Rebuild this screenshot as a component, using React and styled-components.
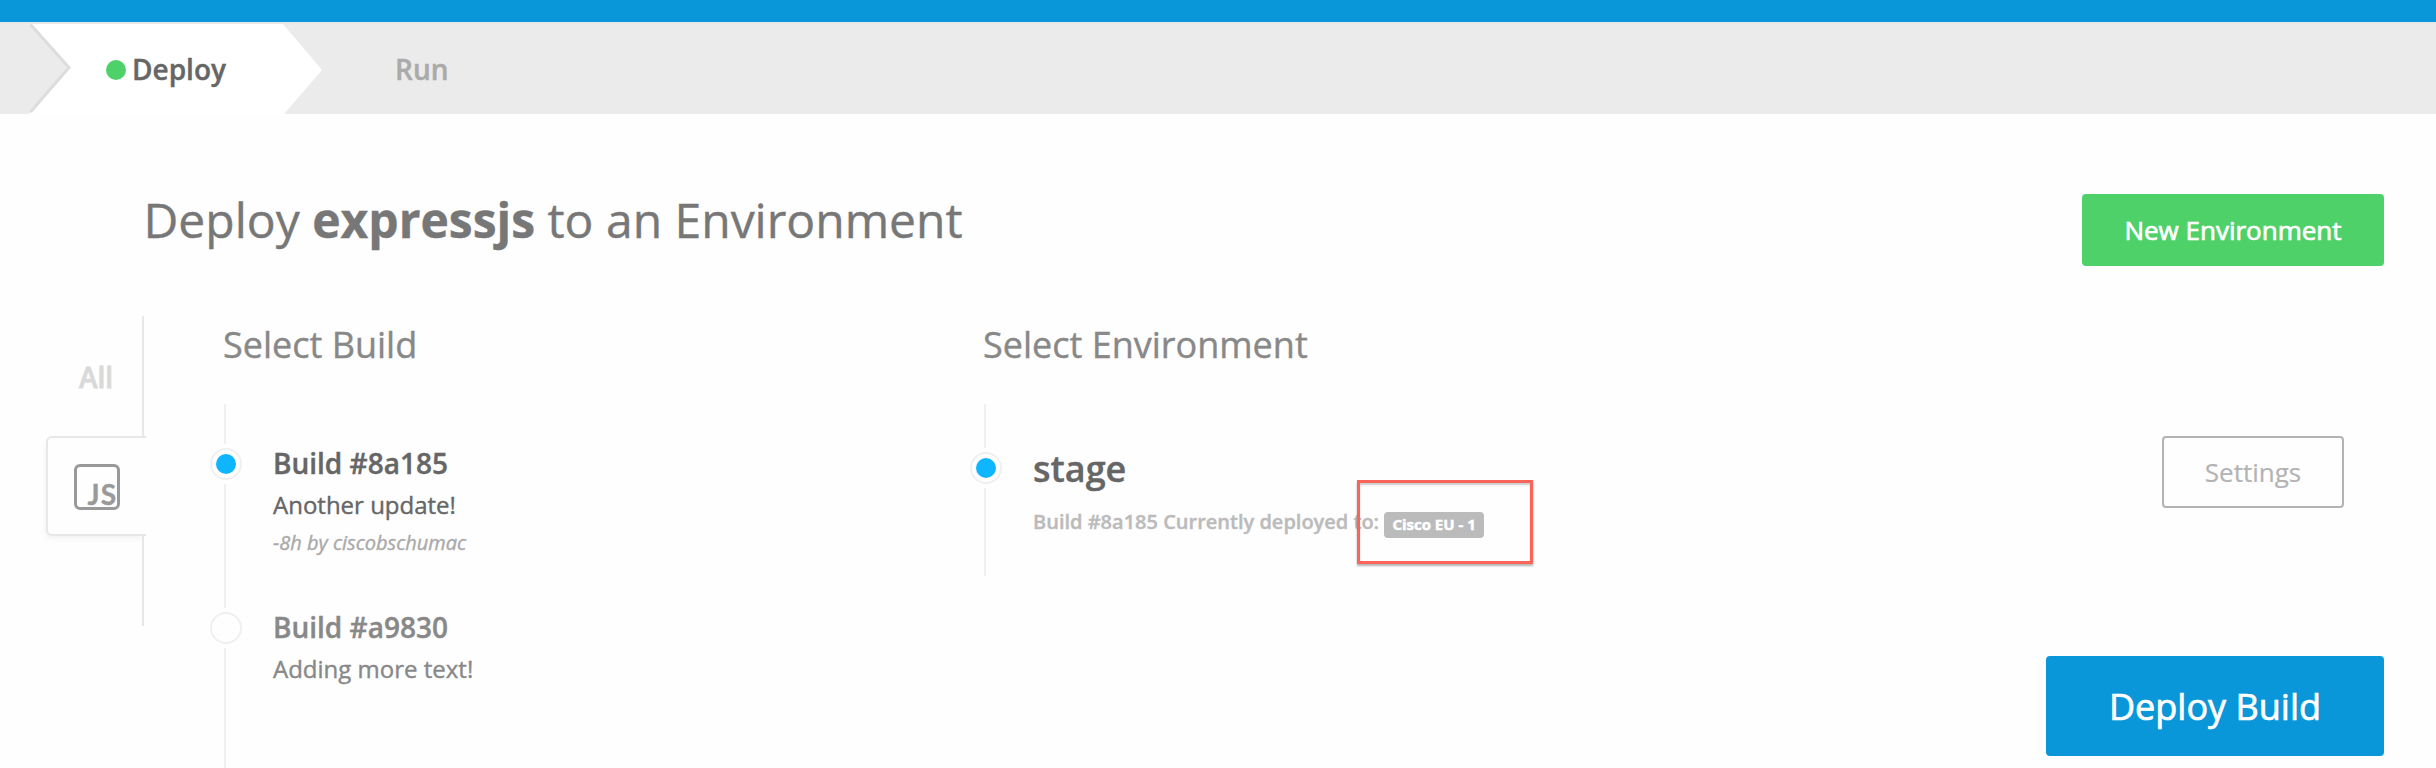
import React from "react";
import styled, { createGlobalStyle } from "styled-components";

const Global = createGlobalStyle`
  *, *::before, *::after { box-sizing: border-box; }
  body {
    margin: 0;
    background: #fefefe;
    font-family: "Open Sans", "Noto Sans", sans-serif;
    color: #666;
  }
  h1, h2, h3, p { margin: 0; font-weight: 400; }
`;

const Page = styled.div`
  display: flex;
  flex-direction: column;
  height: 768px;
  overflow: hidden;
  white-space: nowrap;
  -webkit-text-stroke: 0.4px currentColor;
`;

const TopBar = styled.div`
  flex: none;
  height: 22px;
  background: #0a97d9;
`;

const Steps = styled.nav`
  position: relative;
  flex: none;
  display: flex;
  align-items: center;
  height: 92px;
  background: #ebebeb;
  border-top: 2px solid #e8e8e8;
`;

const StepShapes = styled.svg`
  position: absolute;
  left: 0;
  top: 0;
`;

const Step = styled.div`
  position: relative;
  display: flex;
  align-items: center;
  gap: 6px;
  width: ${(p) => p.$width}px;
  padding-left: ${(p) => p.$inset}px;
  font-size: 28px;
  line-height: 40px;
  font-weight: 600;
  color: ${(p) => (p.$active ? "#666" : "#aaa")};
`;

const StatusDot = styled.span`
  width: 20px;
  height: 20px;
  margin-top: 2px;
  border-radius: 50%;
  background: #4fd16a;
`;

const TitleRow = styled.header`
  flex: none;
  display: flex;
  justify-content: space-between;
  align-items: flex-start;
  height: 202px;
  padding: 74px 52px 0 143.5px;
`;

const Title = styled.h1`
  font-size: 48px;
  line-height: 64px;
  color: #777;
  b { font-weight: 700; }
`;

const Button = styled.button`
  display: flex;
  align-items: center;
  justify-content: center;
  width: ${(p) => p.$width}px;
  height: ${(p) => p.$height || 72}px;
  padding: 0;
  border: 2px solid ${(p) => p.$border || p.$fill};
  border-radius: 4px;
  background: ${(p) => p.$fill};
  color: ${(p) => p.$color || "#fff"};
  font: 400 ${(p) => p.$size || 26}px/40px "Open Sans", sans-serif;
  -webkit-text-stroke: ${(p) => (p.$color ? 0.2 : 0.7)}px currentColor;
`;

const NewButton = styled(Button)`
  margin-top: 6px;
`;

const DeployButton = styled(Button)`
  padding-top: 1px;
`;

const Main = styled.main`
  flex: 1;
  display: flex;
  align-items: stretch;
  min-height: 0;
`;

const Sidebar = styled.aside`
  flex: none;
  display: flex;
  flex-direction: column;
  width: 146px;
  padding-left: 46px;
`;

const TabSlot = styled.div`
  height: ${(p) => p.$height}px;
  margin-right: 2px;
  padding: 40px 0 0 33px;
  border-right: 2px solid #e7e7e7;
  font-size: 28px;
  line-height: 43px;
  font-weight: 600;
  color: #d9d9d9;
  -webkit-text-stroke-width: 0.8px;
`;

const ActiveTab = styled.div`
  height: 100px;
  padding: 26px 0 0 26px;
  border: 2px solid #e7e7e7;
  border-right: 0;
  border-radius: 6px 0 0 6px;
  box-shadow: -2px 4px 6px -2px rgba(0, 0, 0, 0.06);
`;

const JsBadge = styled.div`
  display: flex;
  justify-content: flex-end;
  width: 46px;
  height: 46px;
  padding-top: 10px;
  border: 3px solid #999;
  border-radius: 6px;
  font: 700 28px/34px Lato, sans-serif;
  letter-spacing: 1px;
  color: #999;
`;

const Column = styled.section`
  flex: none;
  display: flex;
  flex-direction: column;
  width: 760px;
  padding-left: ${(p) => p.$inset}px;
`;

const ColumnTitle = styled.h2`
  height: 88px;
  padding: 1px 0 0 13px;
  font-size: 36px;
  line-height: 56px;
  color: #888;
`;

const Entry = styled.article`
  display: flex;
  gap: 31px;
`;

const Rail = styled.div`
  display: flex;
  flex-direction: column;
  gap: 4px;
`;

const Line = styled.span`
  width: 2px;
  height: ${(p) => p.$height}px;
  margin-left: 14px;
  background: #f0f0f0;
`;

const Radio = styled.span`
  display: grid;
  place-items: center;
  width: 32px;
  height: 32px;
  border: 2px solid #f0f0f0;
  border-radius: 50%;
  &::after {
    content: "";
    width: 20px;
    height: 20px;
    border-radius: 50%;
    background: ${(p) => (p.$on ? "#0fb5ff" : "transparent")};
  }
`;

const EntryBody = styled.div`
  padding-top: ${(p) => p.$top}px;
  color: ${(p) => (p.$on ? "#666" : "#888")};
`;

const BuildName = styled.h3`
  font-size: 28px;
  line-height: 38px;
  font-weight: 600;
`;

const Message = styled.p`
  font-size: 24px;
  line-height: 46px;
`;

const Author = styled.p`
  font-size: 20px;
  line-height: 30px;
  font-style: italic;
  color: #aaa;
`;

const EnvName = styled.h3`
  font-size: 36px;
  line-height: 48px;
  font-weight: 600;
`;

const Deployed = styled.p`
  display: flex;
  align-items: flex-start;
  margin-top: 14px;
  font-size: 20px;
  line-height: 30px;
  font-weight: 600;
  color: #bbb;
`;

const Region = styled.span`
  position: relative;
  display: flex;
  justify-content: center;
  width: 100px;
  height: 26px;
  margin: 5px 0 0 5px;
  border-radius: 4px;
  background: #bbb;
  color: #fff;
  font-size: 15px;
  line-height: 24px;
  font-weight: 700;
  -webkit-text-stroke: 0.5px currentColor;
`;

const Highlight = styled.span`
  position: absolute;
  left: -27px;
  top: -32px;
  width: 176px;
  height: 84px;
  border: 3px solid #fb6458;
  box-shadow: 0 2px 2px rgba(0, 0, 0, 0.3), inset 0 2px 2px rgba(0, 0, 0, 0.2);
`;

const Actions = styled.aside`
  flex: 1;
  display: flex;
  flex-direction: column;
  align-items: flex-end;
  justify-content: space-between;
  padding: 120px 52px 12px 0;
`;

const SettingsButton = styled(Button)`
  margin-right: 40px;
`;

const builds = [
  { id: "8a185", message: "Another update!", author: "-8h by ciscobschumac", on: true, lead: 40, tail: 124 },
  { id: "a9830", message: "Adding more text!", lead: 0, tail: 120 },
];

export default function App() {
  return (
    <Page>
      <Global />
      <TopBar />
      <Steps>
        <StepShapes width="340" height="90" viewBox="0 0 340 90">
          <path d="M30 0H283L322 46L284 90H30Z" fill="#fff" />
          <path d="M28 0H30L69 43.500L30 89V90H28Z" fill="#ebebeb" />
          <path d="M30.500 0.500L69 43.500L30.500 88" fill="none" stroke="#ddd" strokeWidth="3" />
        </StepShapes>
        <Step $width={322} $inset={106} $active>
          <StatusDot />
          Deploy
        </Step>
        <Step $width={200} $inset={73}>Run</Step>
      </Steps>
      <TitleRow>
        <Title>
          Deploy <b>expressjs</b> to an Environment
        </Title>
        <NewButton $width={302} $fill="#4fd16a">New Environment</NewButton>
      </TitleRow>
      <Main>
        <Sidebar>
          <TabSlot $height={120}>All</TabSlot>
          <ActiveTab>
            <JsBadge>JS</JsBadge>
          </ActiveTab>
          <TabSlot $height={90} />
        </Sidebar>
        <Column $inset={64}>
          <ColumnTitle>Select Build</ColumnTitle>
          {builds.map((b) => (
            <Entry key={b.id}>
              <Rail>
                <Line $height={b.lead} />
                <Radio $on={b.on} />
                <Line $height={b.tail} />
              </Rail>
              <EntryBody $on={b.on} $top={b.lead}>
                <BuildName>Build #{b.id}</BuildName>
                <Message>{b.message}</Message>
                {b.author && <Author>{b.author}</Author>}
              </EntryBody>
            </Entry>
          ))}
        </Column>
        <Column $inset={64}>
          <ColumnTitle>Select Environment</ColumnTitle>
          <Entry>
            <Rail>
              <Line $height={44} />
              <Radio $on />
              <Line $height={88} />
            </Rail>
            <EntryBody $on $top={41}>
              <EnvName>stage</EnvName>
              <Deployed>
                Build #8a185 Currently deployed to:
                <Region>
                  Cisco EU - 1
                  <Highlight />
                </Region>
              </Deployed>
            </EntryBody>
          </Entry>
        </Column>
        <Actions>
          <SettingsButton $width={182} $fill="transparent" $border="#b3b3b3" $color="#b3b3b3">
            Settings
          </SettingsButton>
          <DeployButton $width={338} $height={100} $size={36} $fill="#0a97d9">Deploy Build</DeployButton>
        </Actions>
      </Main>
    </Page>
  );
}
